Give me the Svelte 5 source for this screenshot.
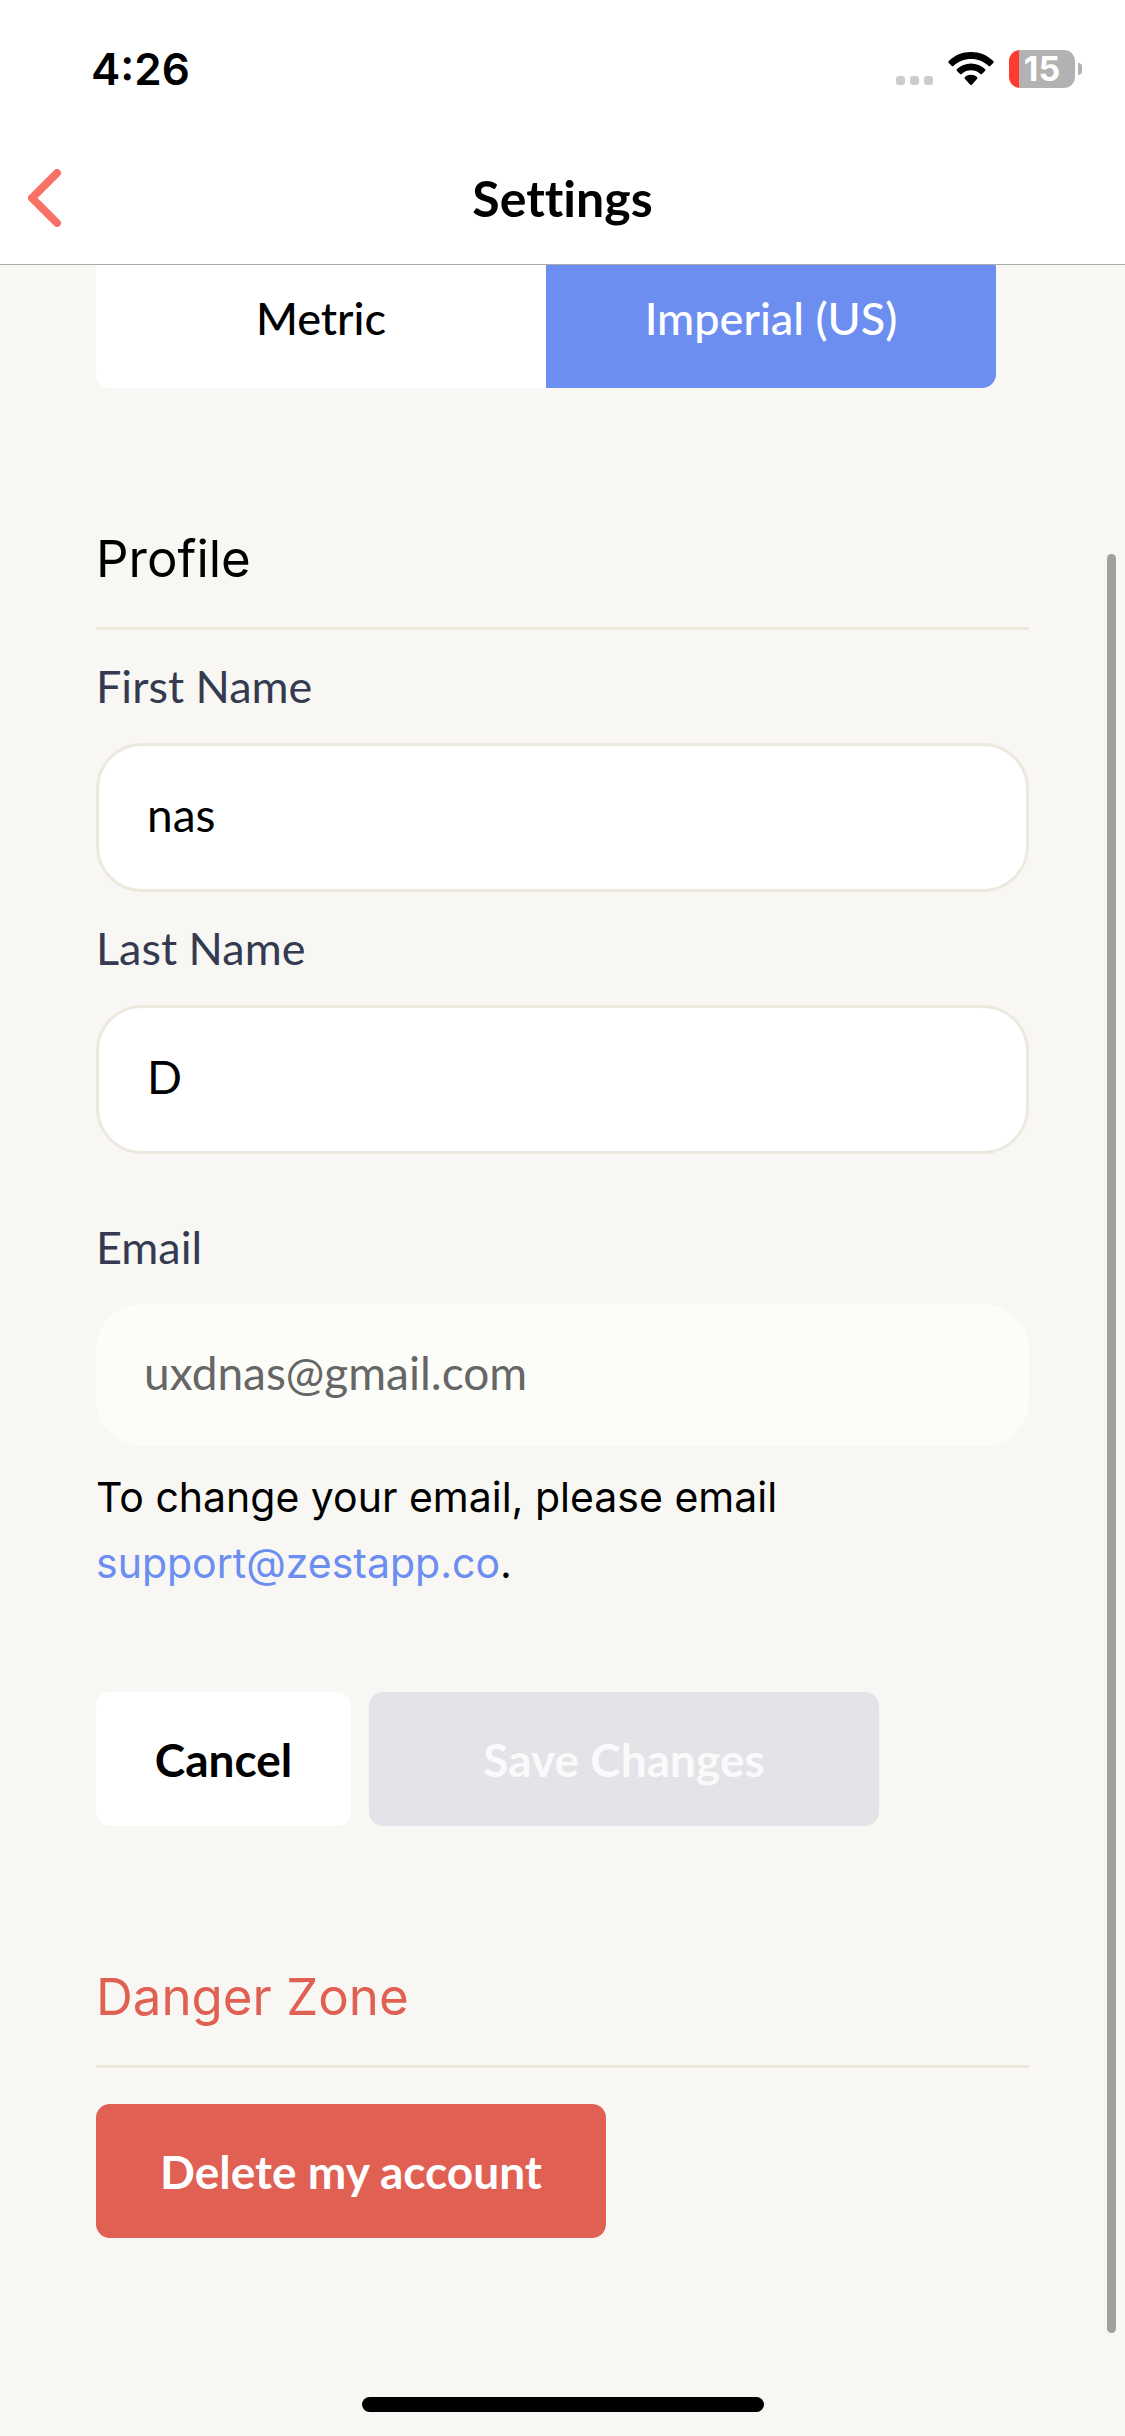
<script lang="ts">
   let units = $state("imperial");
   let firstName = $state("nas");
   let lastName = $state("D");
   let email = $state("uxdnas@gmail.com");

   const unitOptions = [
      { id: "metric", name: "Metric" },
      { id: "imperial", name: "Imperial (US)" },
   ];
</script>

<div class="screen">
   <header>
      <div class="status">
         <span class="time">4:26</span>
         <div class="indicators">
            <svg class="signal" viewBox="0 0 37 34" aria-hidden="true">
               <rect x="0" y="24" width="9" height="9" rx="3" />
               <rect x="14" y="24" width="9" height="9" rx="3" />
               <rect x="28" y="24" width="9" height="9" rx="3" />
            </svg>
            <svg class="wifi" viewBox="0 0 46 34" aria-hidden="true">
               <path d="M23 0C31.600 0 39.400 3.300 45.200 8.900Q46.200 10 45.200 11L42.500 13.700Q41.500 14.700 40.400 13.700C35.800 9.500 29.700 7 23 7S10.200 9.500 5.600 13.700Q4.500 14.700 3.500 13.700L.8 11Q-.2 10 .8 8.900C6.600 3.300 14.400 0 23 0Z" />
               <path d="M23 11.500C28.400 11.500 33.300 13.600 37 17Q38 18 37 19L34.200 21.800Q33.200 22.800 32.100 21.800A13.700 13.700 0 0 0 13.900 21.800Q12.800 22.800 11.800 21.800L9 19Q8 18 9 17C12.700 13.600 17.600 11.500 23 11.500Z" />
               <path d="M23 22.800C25.300 22.800 27.400 23.600 29 25Q30 26 29 27L24 32.500Q23 33.600 22 32.500L17 27Q16 26 17 25C18.600 23.600 20.700 22.800 23 22.800Z" />
            </svg>
            <div class="battery">
               <span class="level">15</span>
               <span class="cap"></span>
            </div>
         </div>
      </div>
      <nav>
         <button class="back" type="button" aria-label="Back">
            <svg viewBox="0 0 34 58" aria-hidden="true">
               <path d="M29 4 4 29 29 54" />
            </svg>
         </button>
         <h1>Settings</h1>
      </nav>
   </header>

   <main>
      <div class="units" role="group" aria-label="Units">
         {#each unitOptions as unit}
            <button
               type="button"
               class:selected={units === unit.id}
               aria-pressed={units === unit.id}
               onclick={() => (units = unit.id)}
            >
               {unit.name}
            </button>
         {/each}
      </div>

      <form onsubmit={(e) => e.preventDefault()}>
         <h2>Profile</h2>
         <div class="field">
            <label for="first-name">First Name</label>
            <input id="first-name" type="text" bind:value={firstName} />
         </div>
         <div class="field">
            <label for="last-name">Last Name</label>
            <input id="last-name" type="text" bind:value={lastName} />
         </div>
         <div class="field email">
            <label for="email">Email</label>
            <input id="email" type="email" bind:value={email} disabled />
         </div>
         <p>
            To change your email, please email<br />
            <a href="mailto:support@zestapp.co">support@zestapp.co</a>.
         </p>
         <div class="actions">
            <button class="button cancel" type="button">Cancel</button>
            <button class="button wide save" type="submit" disabled>Save Changes</button>
         </div>
      </form>

      <section class="danger">
         <h2>Danger Zone</h2>
         <button class="button wide delete" type="button">Delete my account</button>
      </section>
   </main>

   <div class="scrollbar"></div>
   <div class="home-indicator"></div>
</div>

<style>
   :global(body) {
      background: #f8f7f3;
   }

   .screen {
      position: relative;
      min-height: 100vh;
      overflow: hidden;
      background: #f8f7f3;
      color: #000;
      font-family: Lato, "Open Sans", sans-serif;
      font-variant-ligatures: none;
   }

   button,
   input {
      font-family: inherit;
      border: none;
      margin: 0;
   }

   button {
      cursor: pointer;
   }

   header {
      position: relative;
      z-index: 1;
      background: #fff;
      border-bottom: 1px solid #aaa;
   }

   .status {
      display: flex;
      align-items: center;
      justify-content: space-between;
      height: 138px;
      padding: 0 43px 0 91px;
   }

   .time {
      font: 600 44px/48px Inter, sans-serif;
   }

   .indicators {
      display: flex;
      align-items: center;
      gap: 15px;
   }

   .signal {
      width: 37px;
      height: 34px;
      fill: #ccc;
   }

   .wifi {
      width: 46px;
      height: 34px;
   }

   .battery {
      display: flex;
      align-items: center;
      gap: 3px;
   }

   .level {
      width: 66px;
      border-radius: 11px;
      background: linear-gradient(to right, #ff3b30 15%, #b2b2b2 15%);
      color: #fff;
      font: 700 34px/38px Inter, sans-serif;
      text-align: center;
   }

   .cap {
      width: 4px;
      height: 12px;
      border-radius: 0 4px 4px 0;
      background: #b2b2b2;
   }

   nav {
      display: grid;
      grid-template-columns: 1fr auto 1fr;
      align-items: center;
      height: 120px;
      padding: 0 28px 6px;
   }

   .back {
      justify-self: start;
      display: flex;
      padding: 0;
      background: none;

      svg {
         width: 34px;
         height: 58px;
         fill: none;
         stroke: #fb7064;
         stroke-width: 8;
         stroke-linecap: round;
         stroke-linejoin: round;
      }
   }

   h1 {
      margin: 0;
      font-size: 50px;
      line-height: 60px;
      font-weight: 700;
   }

   main {
      padding: 0 96px 198px;
   }

   .units {
      display: grid;
      grid-template-columns: 1fr 1fr;
      margin: -11px 33px 0 0;
      border-radius: 14px;
      overflow: hidden;

      button {
         height: 134px;
         padding: 0 0 6px;
         background: #fff;
         color: #000;
         font-size: 45px;
         font-weight: 500;
      }

      .selected {
         background: #6b8ef0;
         color: #fff;
      }
   }

   form {
      margin-top: 139px;
   }

   h2 {
      margin: 0 0 32px;
      padding-bottom: 36px;
      border-bottom: 3px solid #ebe9dd;
      font: 400 51px/64px Inter, sans-serif;
   }

   .field {
      margin-bottom: 32px;
   }

   label {
      display: block;
      margin-bottom: 33px;
      color: #343a50;
      font-size: 45px;
      line-height: 48px;
   }

   input {
      display: block;
      box-sizing: border-box;
      width: 100%;
      height: 149px;
      padding: 0 48px 6px;
      border: 3px solid #ece9df;
      border-radius: 46px;
      background: #fff;
      color: #000;
      font-size: 46px;
   }

   .email {
      margin: 69px 0 18px;

      input {
         height: 142px;
         border: none;
         background: #fcfdf8;
         color: #666;
      }
   }

   p {
      margin: 0;
      font: 400 41px/66px Inter, sans-serif;
   }

   a {
      color: #6b8ef0;
      text-decoration: none;
   }

   .actions {
      display: flex;
      gap: 18px;
      margin-top: 96px;
   }

   .button {
      min-width: 255px;
      height: 134px;
      padding: 0 48px;
      border-radius: 14px;
      font-size: 46px;
      font-weight: 700;
   }

   .wide {
      min-width: 510px;
   }

   .cancel {
      background: #fff;
      color: #000;
   }

   .save {
      background: #e4e3e8;
      color: #fafafb;
   }

   .danger {
      margin-top: 139px;

      h2 {
         margin-bottom: 36px;
         color: #e06153;
      }
   }

   .delete {
      background: #e06153;
      color: #fff;
   }

   .scrollbar {
      position: absolute;
      top: 554px;
      right: 9px;
      bottom: 103px;
      width: 9px;
      border-radius: 5px;
      background: #a1a09b;
   }

   .home-indicator {
      position: absolute;
      bottom: 24px;
      left: 50%;
      width: 402px;
      height: 15px;
      border-radius: 8px;
      background: #000;
      transform: translateX(-50%);
   }
</style>
